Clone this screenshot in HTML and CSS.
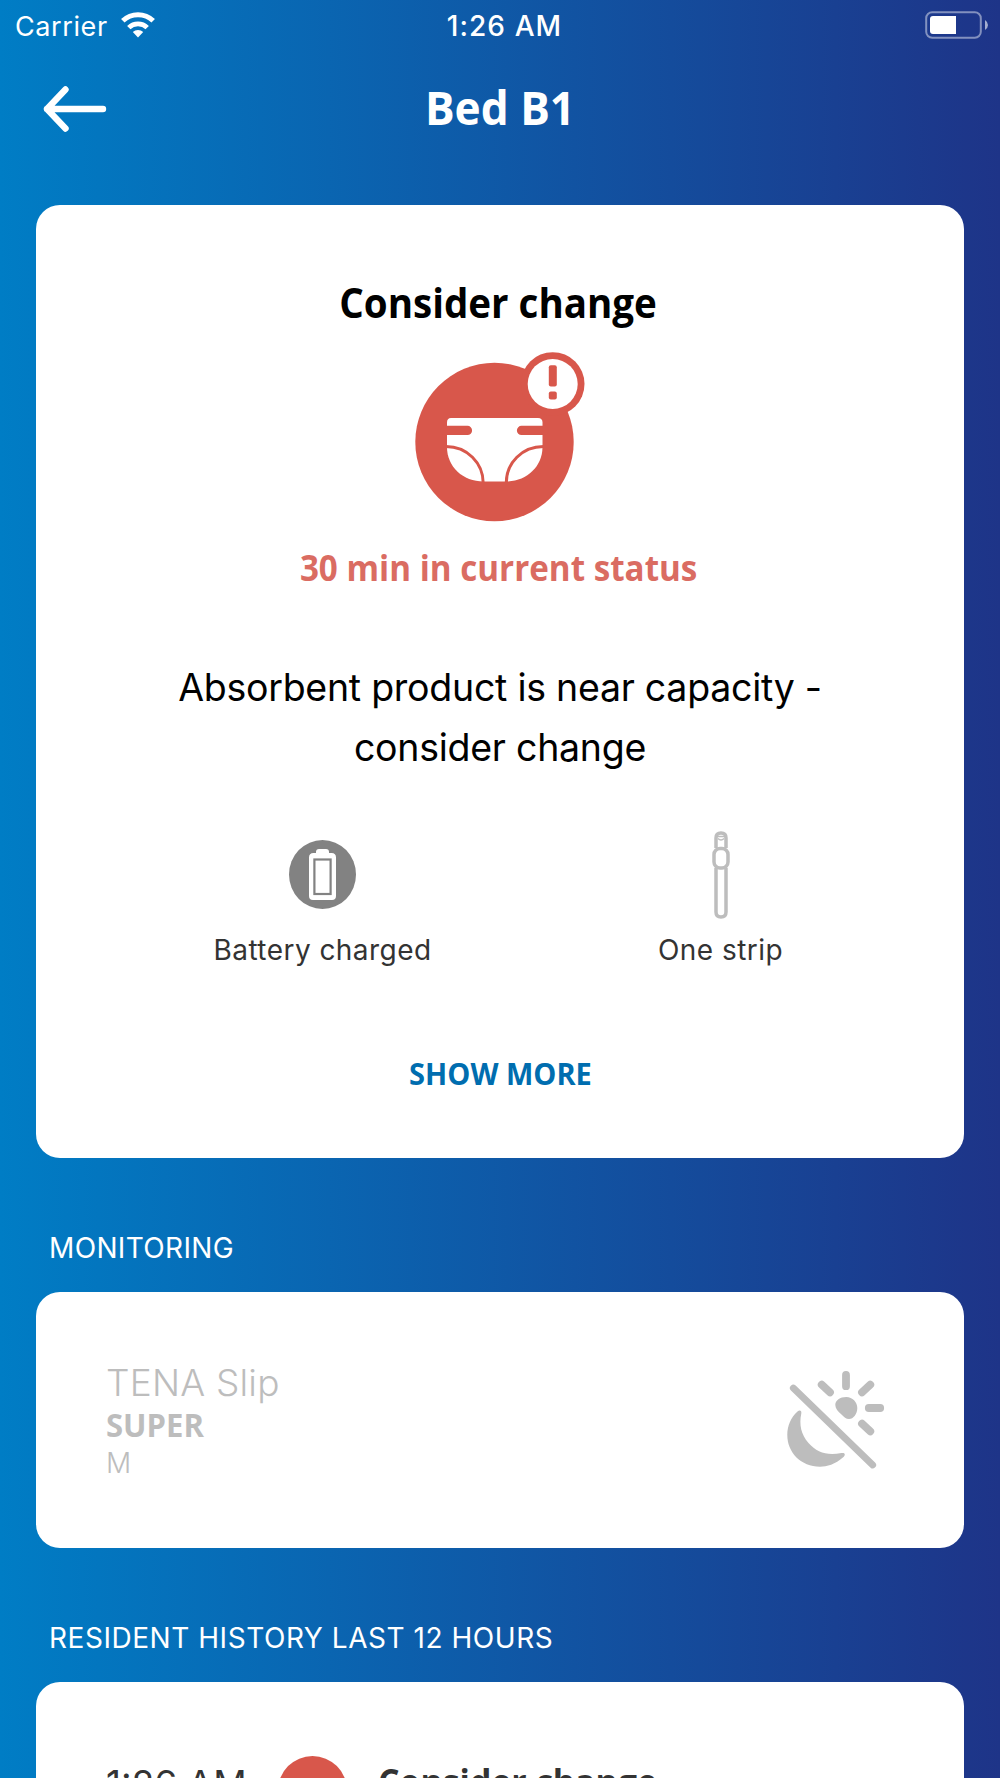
FILE: index.html
```html
<!DOCTYPE html>
<html lang="en">
<head>
    <meta charset="UTF-8">
    <meta name="viewport" content="width=device-width, initial-scale=1.0">
    <title>Bed B1</title>
    <link rel="stylesheet" href="styles.css">
</head>
<body>
    <!-- Status bar -->
    <div class="status-bar">
        <div class="carrier">
            <span class="carrier-name">Carrier</span>
            <svg class="wifi" width="34" height="26" viewBox="0 0 34 26">
                <path d="M17 25.5 L11.8 20 A7.6 7.6 0 0 1 22.2 20 Z" fill="#fff"/>
                <path d="M7.8 15.6 A13.2 13.2 0 0 1 26.2 15.6" fill="none" stroke="#fff" stroke-width="4.8"/>
                <path d="M1.8 8.8 A21.8 21.8 0 0 1 32.2 8.8" fill="none" stroke="#fff" stroke-width="5"/>
            </svg>
        </div>
        <span class="clock">1:26 AM</span>
        <svg class="battery" width="64" height="28" viewBox="0 0 64 28">
            <rect x="1.2" y="1.2" width="54.6" height="25.6" rx="6" fill="none" stroke="#fff" stroke-opacity="0.45" stroke-width="2"/>
            <path d="M8 5 H31 V23 H8 Q5 23 5 20 V8 Q5 5 8 5 Z" fill="#fff"/>
            <path d="M60 9 Q63 11 63 14 Q63 17 60 19 Z" fill="#fff" fill-opacity="0.6"/>
        </svg>
    </div>

    <!-- Header -->
    <header class="header">
        <svg class="back" width="64" height="46" viewBox="0 0 64 46">
            <path d="M22.5 3.5 L4 23 L22.5 42.5 M4 23 H60" fill="none" stroke="#fff" stroke-width="6.4" stroke-linecap="round" stroke-linejoin="round"/>
        </svg>
        <h1>Bed B1</h1>
    </header>

    <!-- Current status -->
    <section class="card status-card">
        <h2>Consider change</h2>
        <svg class="status-icon" width="170" height="170" viewBox="0 0 170 170">
            <circle cx="79.5" cy="90" r="79.2" fill="#d8574b"/>
            <circle cx="137.7" cy="32" r="31.8" fill="#d8574b"/>
            <circle cx="137.7" cy="32" r="25" fill="#fff"/>
            <rect x="133.8" y="13.2" width="8" height="21.4" rx="2" fill="#d8574b"/>
            <rect x="133.8" y="39.6" width="8" height="8" rx="2" fill="#d8574b"/>
            <path d="M36 66 H123 Q127.5 66 127.5 70.5 V95 C127.5 115 111 129.5 91 129.5 H68.5 C48 129.5 32 115 32 95 V70.5 Q32 66 36 66 Z" fill="#fff"/>
            <path d="M30 78.4 H52.5 M129 78.4 H106.5" stroke="#d8574b" stroke-width="9.2" stroke-linecap="round"/>
            <path d="M31 94.5 C52 94.5 68.2 111 68.2 131 M128.5 94.5 C107 94.5 91.3 111 91.3 131" fill="none" stroke="#d8574b" stroke-width="3"/>
        </svg>
        <p class="duration">30 min in current status</p>
        <p class="message">Absorbent product is near capacity -<br>consider change</p>
        <div class="indicators">
            <div class="indicator">
                <svg width="67" height="88" viewBox="0 0 67 88">
                    <ellipse cx="33.5" cy="43.5" rx="33.5" ry="34.5" fill="#828282"/>
                    <path d="M27 22 V21 Q27 18 30 18 H37 Q40 18 40 21 V22 H42.5 Q47 22 47 26.5 V65 Q47 69 43 69 H24 Q20 69 20 65 V26.5 Q20 22 24.5 22 Z" fill="#fff"/>
                    <rect x="25.4" y="28.5" width="16.2" height="34.5" fill="#fff" stroke="#828282" stroke-width="2.2"/>
                </svg>
                <span class="battery-label">Battery charged</span>
            </div>
            <div class="indicator">
                <svg width="18" height="88" viewBox="0 0 18 88" fill="none" stroke="#bdbdbd" stroke-width="3.5">
                    <path d="M4 17 V7 Q4 2 9 2 Q14 2 14 7 V17"/>
                    <path d="M5 5.5 H13 M6 7.5 Q9 10.5 12 7.5" stroke-width="1.6"/>
                    <rect x="2" y="17.5" width="14" height="19.5" rx="6"/>
                    <path d="M4 37 V81 Q4 86 9 86 Q14 86 14 81 V37"/>
                </svg>
                <span class="strip-label">One strip</span>
            </div>
        </div>
        <a class="show-more">SHOW MORE</a>
    </section>

    <!-- Monitoring -->
    <h3 class="section-title monitoring-title">MONITORING</h3>
    <section class="card product-card">
        <div class="product">
            <p class="product-name">TENA Slip</p>
            <p class="product-type">SUPER</p>
            <p class="product-size">M</p>
        </div>
        <svg class="day-night" width="98" height="98" viewBox="0 0 98 98">
            <g fill="none" stroke="#bdbdbd" stroke-linecap="round">
                <path d="M6.3 17 L85.7 94" stroke-width="6.8"/>
                <path d="M59 3.9 V15.2 M34.7 13.7 L43 21.3 M83.3 13.7 L75 21.3 M81.8 37 H93.2 M75 52.7 L83.3 60.3" stroke-width="7.8"/>
            </g>
            <path d="M48.3 34 C48.3 29.5 53 26 59.3 26 C65.5 26 70.3 31 70.3 37 C70.3 43 66.5 48 62 48 C59 48 57 46 54.5 43.5 C51 40.5 48.3 37.5 48.3 34 Z" fill="#bdbdbd"/>
            <path d="M10.5 40.5 C13 38.5 14.8 40 14.3 42.5 C12 53.5 14 63.5 21.5 72 C30 81.5 40 85 54.5 82 C58 81.5 58.8 83.5 56.5 86 C48 93.5 40 95.7 33 95.7 C14 95.7 .3 81.5 .3 64 C.3 54.5 4 46.5 10.5 40.5 Z" fill="#bdbdbd"/>
        </svg>
    </section>

    <!-- History -->
    <h3 class="section-title history-title">RESIDENT HISTORY LAST 12 HOURS</h3>
    <section class="card history-card">
        <div class="history-row">
            <span class="history-time">1:26 AM</span>
            <span class="history-dot"></span>
            <span class="history-status">Consider change</span>
        </div>
    </section>
</body>
</html>
```
FILE: styles.css
```css
* {
    box-sizing: border-box;
    margin: 0;
    padding: 0;
}

body {
    height: 1778px;
    overflow: hidden;
    font-family: Inter, "Liberation Sans", sans-serif;
    background: linear-gradient(to right, #007dc5, #1e3488);
    display: flex;
    flex-direction: column;
}

svg {
    display: block;
    flex: none;
}

/* Slightly condensed headings */
h1, h2, .duration, .show-more, .product-type, .history-status {
    font-family: "Open Sans", "Noto Sans", sans-serif;
    font-weight: 700;
    white-space: nowrap;
    transform: scaleX(0.94);
}

/* Status bar */
.status-bar {
    height: 52px;
    padding: 0 11px 0 15px;
    display: grid;
    grid-template-columns: 1fr auto 1fr;
    align-items: center;
    flex: none;
    color: #fff;
    font-size: 27px;
}

.carrier {
    display: flex;
    align-items: center;
    gap: 13px;
    letter-spacing: 0.6px;
}

.wifi {
    margin-top: -3px;
}

.clock {
    padding-left: 5px;
    font-size: 28px;
    font-weight: 500;
    letter-spacing: 1.1px;
}

.battery {
    justify-self: end;
    margin-top: -3px;
}

/* Header */
.header {
    height: 153px;
    padding: 0 43px;
    display: grid;
    grid-template-columns: 64px 1fr 64px;
    align-items: start;
    flex: none;
    color: #fff;
}

.back {
    margin-top: 34px;
}

h1 {
    font-size: 47px;
    line-height: 60px;
    margin-top: 25px;
    text-align: center;
}

/* Cards */
.card {
    width: 928px;
    margin: 0 36px;
    border-radius: 24px;
    background: #fff;
    flex: none;
}

.status-card {
    height: 953px;
    padding-top: 67px;
    display: flex;
    flex-direction: column;
    align-items: center;
}

h2 {
    padding-right: 4px;
    font-size: 41px;
    line-height: 60px;
    color: #000;
}

.status-icon {
    margin-top: 20px;
}

.duration {
    margin-top: 21px;
    padding-right: 2px;
    font-size: 36px;
    line-height: 50px;
    color: #da6c62;
    transform: scaleX(0.922);
}

.message {
    margin-top: 65px;
    font-size: 37.5px;
    line-height: 60px;
    letter-spacing: -0.26px;
    text-align: center;
    color: #000;
}

.indicators {
    width: 796px;
    margin: 53px 0 0 43px;
    display: grid;
    grid-template-columns: 1fr 1fr;
}

.indicator {
    display: flex;
    flex-direction: column;
    align-items: center;
    font-size: 28px;
    line-height: 40px;
    letter-spacing: 0.45px;
    gap: 11px;
    color: #333;
}

.show-more {
    margin-top: 84px;
    font-size: 30px;
    line-height: 40px;
    color: #006daf;
    transform: scaleX(0.967);
}

/* Section titles */
.section-title {
    padding-left: 49px;
    font-size: 28px;
    font-weight: 400;
    line-height: 40px;
    color: #fff;
    flex: none;
}

.monitoring-title {
    margin: 70px 0 24px;
    letter-spacing: 0.35px;
}

.history-title {
    margin: 70px 0 24px;
    letter-spacing: 0.54px;
}

/* Product */
.product-card {
    height: 256px;
    padding: 71px 79px 0 70px;
    display: flex;
    justify-content: space-between;
    color: #bdbdbd;
}

.product-name {
    font-size: 37px;
    font-weight: 300;
    line-height: 40px;
    letter-spacing: 0.2px;
}

.product-type {
    font-size: 33px;
    line-height: 43px;
    transform-origin: left;
}

.product-size {
    font-size: 28px;
    font-weight: 300;
    line-height: 35px;
}

.day-night {
    margin-top: 8px;
}

/* History */
.history-card {
    flex: 1;
    min-height: 0;
    overflow: hidden;
    border-radius: 24px 24px 0 0;
    padding: 74px 70px 0;
}

.history-row {
    display: flex;
    align-items: flex-start;
    line-height: 56px;
    color: #333;
}

.history-time {
    width: 172px;
    font-size: 37px;
}

.history-dot {
    width: 69px;
    height: 69px;
    border-radius: 50%;
    background: #d8574b;
}

.history-status {
    margin: -2px 0 0 31px;
    font-size: 36px;
    transform-origin: left;
}
```
